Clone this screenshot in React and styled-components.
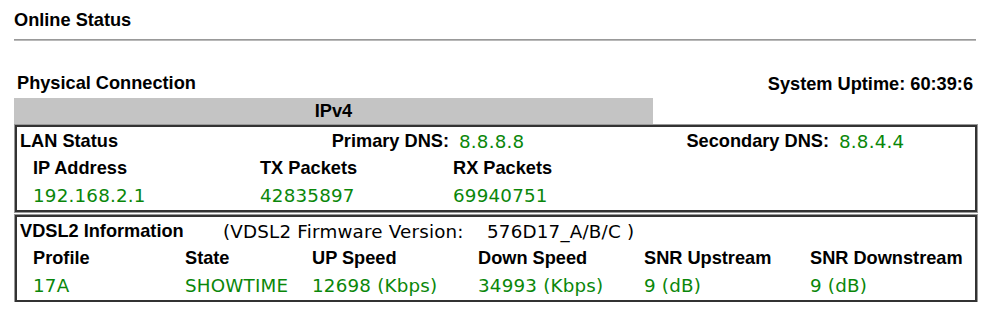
import React from "react";
import styled, { createGlobalStyle } from "styled-components";

const Global = createGlobalStyle`
  html, body { margin: 0; padding: 0; background: #fff; }
  body { font-family: "Liberation Sans", Arial, sans-serif; color: #000; }
`;

const Page = styled.div`
  width: 963px;
  padding: 10px 0 0 14px;
`;

const Title = styled.div`
  font: bold 18.2px/21px "Liberation Sans", Arial, sans-serif;
  height: 21px;
`;

const Rule = styled.div`
  margin-top: 8px;
  width: 962px;
  height: 0;
  border-top: 1px solid #999;
  border-bottom: 1px solid #b8b8b8;
`;

const HeadRow = styled.div`
  margin-top: 32px;
  display: flex;
  justify-content: space-between;
  align-items: flex-end;
  padding: 0 4px 0 3px;
  height: 21px;
`;

const Bold = styled.span`
  font: bold 18.2px/21px "Liberation Sans", Arial, sans-serif;
  white-space: nowrap;
`;

const Uptime = styled(Bold)`
  position: relative;
  top: 1px;
`;

const TabBar = styled.div`
  margin-top: 4px;
  width: 639px;
  height: 26px;
  background: #c4c4c4;
  display: flex;
  align-items: center;
  justify-content: center;
  font: bold 18.2px/21px "Liberation Sans", Arial, sans-serif;
`;

const Box = styled.div`
  margin-left: 1px;
  margin-top: ${(p) => (p.$gap ? "3px" : "1px")};
  width: 962px;
  box-sizing: border-box;
  border: 2px solid #333;
  box-shadow: 0 0 0 1px #999;
  padding: 1px 0;
`;

const Row = styled.div`
  display: grid;
  grid-template-columns: ${(p) => p.$cols};
  height: 27px;
  align-items: center;
  padding-left: ${(p) => p.$indent || "3px"};
`;

const Cell = styled.div`
  font: ${(p) =>
    p.$value
      ? `18.3px/21px "DejaVu Sans", Verdana, sans-serif`
      : `bold 18.2px/21px "Liberation Sans", Arial, sans-serif`};
  letter-spacing: ${(p) => (p.$value ? "0.2px" : "0")};
  color: ${(p) => (p.$green ? "#0a870a" : "#000")};
  text-align: ${(p) => (p.$right ? "right" : "left")};
  padding-left: ${(p) => p.$pl || "0"};
  white-space: nowrap;
`;

export default function App() {
  return (
    <>
      <Global />
      <Page>
        <Title>Online Status</Title>
        <Rule />
        <HeadRow>
          <Bold>Physical Connection</Bold>
          <Uptime>System Uptime: 60:39:6</Uptime>
        </HeadRow>
        <TabBar>IPv4</TabBar>

        <Box>
          <Row $cols="310px 119px 236px 144px 1fr">
            <Cell>LAN Status</Cell>
            <Cell $right>Primary DNS:</Cell>
            <Cell $value $green $pl="10px">8.8.8.8</Cell>
            <Cell $right>Secondary DNS:</Cell>
            <Cell $value $green $pl="10px">8.8.4.4</Cell>
          </Row>
          <Row $cols="227px 193px 1fr" $indent="16px">
            <Cell>IP Address</Cell>
            <Cell>TX Packets</Cell>
            <Cell>RX Packets</Cell>
          </Row>
          <Row $cols="227px 193px 1fr" $indent="16px">
            <Cell $value $green>192.168.2.1</Cell>
            <Cell $value $green>42835897</Cell>
            <Cell $value $green>69940751</Cell>
          </Row>
        </Box>

        <Box $gap>
          <Row $cols="203px 264px 1fr">
            <Cell>VDSL2 Information</Cell>
            <Cell $value>(VDSL2 Firmware Version:</Cell>
            <Cell $value>576D17_A/B/C )</Cell>
          </Row>
          <Row $cols="152px 127px 166px 166px 166px 1fr" $indent="16px">
            <Cell>Profile</Cell>
            <Cell>State</Cell>
            <Cell>UP Speed</Cell>
            <Cell>Down Speed</Cell>
            <Cell>SNR Upstream</Cell>
            <Cell>SNR Downstream</Cell>
          </Row>
          <Row $cols="152px 127px 166px 166px 166px 1fr" $indent="16px">
            <Cell $value $green>17A</Cell>
            <Cell $value $green>SHOWTIME</Cell>
            <Cell $value $green>12698 (Kbps)</Cell>
            <Cell $value $green>34993 (Kbps)</Cell>
            <Cell $value $green>9 (dB)</Cell>
            <Cell $value $green>9 (dB)</Cell>
          </Row>
        </Box>
      </Page>
    </>
  );
}
